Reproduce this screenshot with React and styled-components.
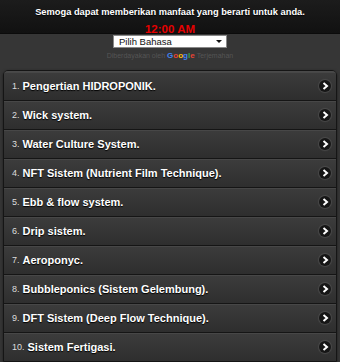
import React from 'react'
import styled, { createGlobalStyle } from 'styled-components'

const Global = createGlobalStyle`
    html, body {
        margin: 0;
        padding: 0;
        background: #363636;
        font-family: "Liberation Sans", Arial, sans-serif;
    }
`

const Page = styled.div`
    width: 340px;
    height: 362px;
    overflow: hidden;
    background: #363636;
`

const Header = styled.div`
    height: 34px;
    background: linear-gradient(#1c1c1c, #111);
    border-bottom: 1px solid #0b0b0b;
    display: flex;
    flex-direction: column;
    align-items: center;
    box-sizing: border-box;
    padding-top: 6px;
`

const Tagline = styled.div`
    color: #fff;
    font-size: 9.3px;
    font-weight: bold;
    text-shadow: 0 1px 1px #000;
    line-height: 12px;
`

const Clock = styled.div`
    color: #e50000;
    font-size: 11.5px;
    font-weight: bold;
    line-height: 14px;
    margin-top: 4px;
`

const Translate = styled.div`
    display: flex;
    flex-direction: column;
    align-items: center;
    padding-top: 1px;
`

const Select = styled.div`
    width: 103px;
    height: 11px;
    background: #fff;
    border: 1px solid #888;
    display: flex;
    align-items: center;
    justify-content: space-between;
    padding: 0 4px 0 5px;
    box-sizing: content-box;
    font-size: 9.5px;
    color: #111;
`

const Caret = styled.span`
    width: 0;
    height: 0;
    border-left: 3px solid transparent;
    border-right: 3px solid transparent;
    border-top: 3px solid #111;
`

const Powered = styled.div`
    margin-top: 3px;
    font-size: 7px;
    color: #555;
    display: flex;
    align-items: center;
    gap: 2px;
`

const G = styled.span`
    font-weight: bold;
    font-size: 8px;
    color: ${({ c }) => c};
`

const List = styled.ul`
    list-style: none;
    margin: 10px 3px 0 3px;
    padding: 0;
    border: 1px solid #151515;
    border-radius: 5px 5px 0 0;
    overflow: hidden;
    box-shadow: 0 1px 3px rgba(0, 0, 0, 0.5);
`

const Row = styled.li`
    height: 28px;
    display: flex;
    align-items: center;
    padding: 0 5px 0 8px;
    background: linear-gradient(#3c3c3c, #2e2e2e);
    border-top: 1px solid ${({ first }) => (first ? '#4a4a4a' : '#151515')};
    box-shadow: inset 0 1px 0 #474747;
`

const Num = styled.span`
    color: #ddd;
    font-size: 9px;
    margin-right: 3px;
`

const Title = styled.span`
    color: #fff;
    font-size: 11px;
    font-weight: bold;
    text-shadow: 0 1px 1px #000;
    flex: 1;
    white-space: nowrap;
`

const Arrow = styled.span`
    width: 12px;
    height: 12px;
    border-radius: 50%;
    background: #161616;
    box-shadow: 0 0 1px 1px rgba(100, 100, 100, 0.45);
    display: flex;
    align-items: center;
    justify-content: center;
`

const items = [
    'Pengertian HIDROPONIK.',
    'Wick system.',
    'Water Culture System.',
    'NFT Sistem (Nutrient Film Technique).',
    'Ebb & flow system.',
    'Drip sistem.',
    'Aeroponyc.',
    'Bubbleponics (Sistem Gelembung).',
    'DFT Sistem (Deep Flow Technique).',
    'Sistem Fertigasi.',
]

const App = () => {
    return (
        <Page>
            <Global />
            <Header>
                <Tagline>Semoga dapat memberikan manfaat yang berarti untuk anda.</Tagline>
                <Clock>12:00 AM</Clock>
            </Header>
            <Translate>
                <Select>
                    <span>Pilih Bahasa</span>
                    <Caret />
                </Select>
                <Powered>
                    <span>Diberdayakan oleh</span>
                    <span>
                        <G c="#4285f4">G</G><G c="#ea4335">o</G><G c="#fbbc05">o</G>
                        <G c="#4285f4">g</G><G c="#34a853">l</G><G c="#ea4335">e</G>
                    </span>
                    <span>Terjemahan</span>
                </Powered>
            </Translate>
            <List>
                {items.map((t, i) => (
                    <Row key={i} first={i === 0}>
                        <Num>{i + 1}.</Num>
                        <Title>{t}</Title>
                        <Arrow>
                            <svg width="7" height="8" viewBox="0 0 7 8">
                                <path d="M1.5 1 L5 4 L1.5 7" fill="none" stroke="#fff" strokeWidth="2" />
                            </svg>
                        </Arrow>
                    </Row>
                ))}
            </List>
        </Page>
    )
}

export default App
